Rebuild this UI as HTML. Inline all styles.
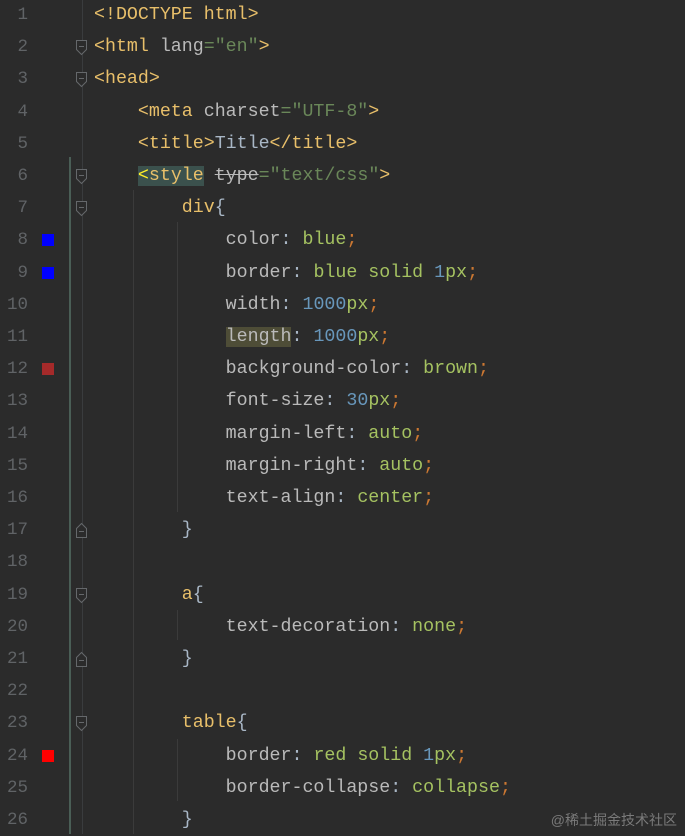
<!DOCTYPE html>
<html><head><meta charset="utf-8"><style>
body{margin:0;width:685px;height:834px;background:#2b2b2b;overflow:hidden;position:relative;font-family:"Liberation Mono",monospace;font-size:18.3px;}
.l{position:absolute;left:0;height:32.2px;line-height:32.2px;white-space:pre;}
.n{position:absolute;width:28px;text-align:right;color:#606366;font-size:17.5px;}
.c{position:absolute;left:94px;color:#a9b7c6}
.t{color:#e8bf6a}.a{color:#bababa}.s{color:#6a8759}.p{color:#bababa}.v{color:#a5c261}.k{color:#cc7832}.num{color:#6897bb}
.sq{position:absolute;left:42px;width:12px;height:12px;}
.g{position:absolute;width:1px;background:#3b3b3b}
.f{position:absolute;left:75px;width:13px;height:17px}
</style></head><body>
<div style="position:absolute;left:69px;top:157px;width:2px;height:677px;background:#4a5e56"></div>
<div style="position:absolute;left:82px;top:0;width:1px;height:834px;background:#3a3c3e"></div>
<div class="g" style="left:133px;top:190px;height:644px"></div>
<div class="g" style="left:177px;top:222px;height:290px"></div>
<div class="g" style="left:177px;top:610px;height:30px"></div>
<div class="g" style="left:177px;top:739px;height:62px"></div>
<div id="code"></div>
<div style="position:absolute;right:8px;bottom:4px;font-family:'Liberation Sans','Noto Sans CJK SC',sans-serif;font-size:14px;color:#7a7a7a">@稀土掘金技术社区</div>
<script>
const L=[
'<span class="t">&lt;!DOCTYPE html&gt;</span>',
'<span class="t">&lt;html </span><span class="a">lang</span><span class="s">="en"</span><span class="t">&gt;</span>',
'<span class="t">&lt;head&gt;</span>',
'    <span class="t">&lt;meta </span><span class="a">charset</span><span class="s">="UTF-8"</span><span class="t">&gt;</span>',
'    <span class="t">&lt;title&gt;</span>Title<span class="t">&lt;/title&gt;</span>',
'    <span style="background:#3b514d"><span style="color:#ffef28">&lt;</span><span class="t">style</span></span> <span class="a" style="text-decoration:line-through">type</span><span class="s">="text/css"</span><span class="t">&gt;</span>',
'        <span class="t">div</span>{',
'            <span class="p">color</span>: <span class="v">blue</span><span class="k">;</span>',
'            <span class="p">border</span>: <span class="v">blue solid </span><span class="num">1</span><span class="v">px</span><span class="k">;</span>',
'            <span class="p">width</span>: <span class="num">1000</span><span class="v">px</span><span class="k">;</span>',
'            <span class="p" style="background:#4e4d37">length</span>: <span class="num">1000</span><span class="v">px</span><span class="k">;</span>',
'            <span class="p">background-color</span>: <span class="v">brown</span><span class="k">;</span>',
'            <span class="p">font-size</span>: <span class="num">30</span><span class="v">px</span><span class="k">;</span>',
'            <span class="p">margin-left</span>: <span class="v">auto</span><span class="k">;</span>',
'            <span class="p">margin-right</span>: <span class="v">auto</span><span class="k">;</span>',
'            <span class="p">text-align</span>: <span class="v">center</span><span class="k">;</span>',
'        }','',
'        <span class="t">a</span>{',
'            <span class="p">text-decoration</span>: <span class="v">none</span><span class="k">;</span>',
'        }','',
'        <span class="t">table</span>{',
'            <span class="p">border</span>: <span class="v">red solid </span><span class="num">1</span><span class="v">px</span><span class="k">;</span>',
'            <span class="p">border-collapse</span>: <span class="v">collapse</span><span class="k">;</span>',
'        }'];
const sq={8:'#0000ff',9:'#0000ff',12:'#a52a2a',24:'#ff0000'};
const fold={2:1,3:1,6:1,7:1,17:2,19:1,21:2,23:1};
const open='<path d="M1.5 1.5H11.5V10.5L6.5 15.5L1.5 10.5Z" fill="#2b2b2b" stroke="#65686b"/><path d="M4 7.5H9" stroke="#65686b"/>';
const close='<path d="M1.5 15.5H11.5V6.5L6.5 1.5L1.5 6.5Z" fill="#2b2b2b" stroke="#65686b"/><path d="M4 9.5H9" stroke="#65686b"/>';
let h='';
L.forEach((s,i)=>{const n=i+1;const top=15+32.2*i-16.1;
h+=`<div class="l" style="top:${top}px;width:685px"><span class="n">${n}</span><span class="c">${s}</span></div>`;
if(sq[n])h+=`<div class="sq" style="top:${top+10}px;background:${sq[n]}"></div>`;
if(fold[n])h+=`<svg class="f" style="top:${top+8}px" viewBox="0 0 13 17">${fold[n]==1?open:close}</svg>`;
});
document.getElementById('code').innerHTML=h;
</script>
</body></html>
